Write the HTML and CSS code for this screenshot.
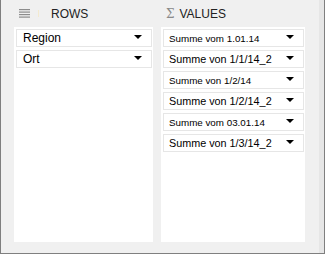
FILE: index.html
```html
<!DOCTYPE html>
<html>

<head>
  <title>Field List</title>
  <link rel="stylesheet" href="styles.css">
</head>

<body>
  <div class="frame">
    <div class="areas">
      <div class="area">
        <div class="area-head">
          <svg class="icon" width="11" height="10" viewBox="0 0 11 10">
            <rect x="0" y="0" width="11" height="1.2" fill="#8c8c8c" />
            <rect x="0" y="2.5" width="11" height="1.2" fill="#8c8c8c" />
            <rect x="0" y="5" width="11" height="1.2" fill="#8c8c8c" />
            <rect x="0" y="7.5" width="11" height="1.2" fill="#8c8c8c" />
          </svg>
          <span class="sep"></span>
          <span class="title">ROWS</span>
        </div>
        <div class="panel">
          <div class="field">Region<span class="arrow"></span></div>
          <div class="field">Ort<span class="arrow"></span></div>
        </div>
      </div>

      <div class="area values">
        <div class="area-head">
          <span class="sigma">&Sigma;</span>
          <span class="title">VALUES</span>
        </div>
        <div class="panel">
          <div class="field small">Summe vom 1.01.14<span class="arrow"></span></div>
          <div class="field">Summe von 1/1/14_2<span class="arrow"></span></div>
          <div class="field small">Summe von 1/2/14<span class="arrow"></span></div>
          <div class="field">Summe von 1/2/14_2<span class="arrow"></span></div>
          <div class="field small">Summe vom 03.01.14<span class="arrow"></span></div>
          <div class="field">Summe von 1/3/14_2<span class="arrow"></span></div>
        </div>
      </div>
    </div>
    <div class="strip"></div>
  </div>
</body>

</html>
```

FILE: styles.css
```css
body {
  margin: 0;
  padding: 0;
  font-family: "Liberation Sans", Arial, sans-serif;
  background-color: #f0f0f0;
}

.frame {
  height: 253px;
  border: 1px solid #7f7f7f;
  border-top: none;
  display: flex;
  background-color: #f0f0f0;
}

.areas {
  flex: 1;
  display: grid;
  grid-template-columns: 139px 144px;
  column-gap: 8px;
  padding-left: 13px;
}

.area {
  display: flex;
  flex-direction: column;
}

.area-head {
  height: 27px;
  display: flex;
  align-items: center;
  font-size: 12px;
  color: #222;
}

.icon {
  margin-left: 5px;
  margin-top: 1px;
}

.sep {
  width: 1px;
  height: 7px;
  background-color: #f3ead0;
  margin-left: 8px;
}

.area:first-child .title {
  margin-left: 12px;
}

.sigma {
  margin-left: 5px;
  font-family: "DejaVu Serif", serif;
  font-size: 12px;
  color: #8a8a8a;
}

.values .title {
  margin-left: 5px;
}

.panel {
  background-color: #fff;
  height: 215px;
  padding: 2px 1px 0 2px;
  box-sizing: border-box;
  display: flex;
  flex-direction: column;
  gap: 3px;
}

.field {
  height: 18px;
  box-sizing: border-box;
  border: 1px solid #e6e6e6;
  display: flex;
  align-items: center;
  justify-content: space-between;
  padding: 0 9px 0 6px;
  font-size: 12px;
  color: #000;
  white-space: nowrap;
}

.values .field {
  font-size: 10.8px;
  padding-left: 5px;
}

.values .field.small {
  font-size: 9.8px;
}

.arrow {
  width: 0;
  height: 0;
  border-left: 4px solid transparent;
  border-right: 4px solid transparent;
  border-top: 4px solid #000;
  margin-top: -2px;
}

.strip {
  width: 5px;
  background-color: #e6e6e6;
}
```
